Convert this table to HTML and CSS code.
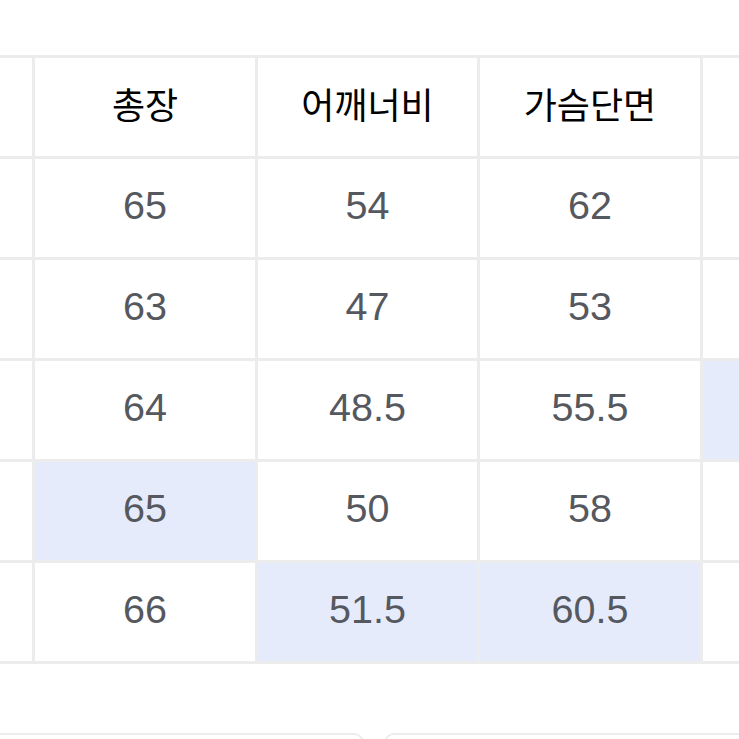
FILE: index.html
```html
<!DOCTYPE html>
<html lang="ko">
<head>
<meta charset="utf-8">
<link rel="stylesheet" href="styles.css">
</head>
<body>
<div class="page">
  <div class="table">
    <div class="cell"></div>
    <div class="cell head">총장</div>
    <div class="cell head">어깨너비</div>
    <div class="cell head">가슴단면</div>
    <div class="cell"></div>

    <div class="cell"></div>
    <div class="cell">65</div>
    <div class="cell">54</div>
    <div class="cell">62</div>
    <div class="cell"></div>

    <div class="cell"></div>
    <div class="cell">63</div>
    <div class="cell">47</div>
    <div class="cell">53</div>
    <div class="cell"></div>

    <div class="cell"></div>
    <div class="cell">64</div>
    <div class="cell">48.5</div>
    <div class="cell">55.5</div>
    <div class="cell hl"></div>

    <div class="cell"></div>
    <div class="cell hl">65</div>
    <div class="cell">50</div>
    <div class="cell">58</div>
    <div class="cell"></div>

    <div class="cell"></div>
    <div class="cell">66</div>
    <div class="cell hl">51.5</div>
    <div class="cell hl">60.5</div>
    <div class="cell"></div>
  </div>
  <div class="bottom">
    <div class="box box-left"></div>
    <div class="box box-right"></div>
  </div>
</div>
</body>
</html>
```

FILE: styles.css
```css
html, body {
  margin: 0;
  padding: 0;
  background: #ffffff;
}

.page {
  width: 739px;
  height: 739px;
  overflow: hidden;
  padding-top: 55px;
  box-sizing: border-box;
}

.table {
  display: grid;
  grid-template-columns: 32px 220px 219px 220px 1fr;
  grid-auto-rows: 98px;
  gap: 3px;
  padding: 3px 0;
  background: #ececec;
}

.cell {
  background: #ffffff;
  display: flex;
  align-items: center;
  justify-content: center;
  padding-bottom: 5px;
  box-sizing: border-box;
  font-family: "Liberation Sans", Arial, sans-serif;
  font-size: 39.5px;
  color: #55585e;
}

.cell.head {
  font-family: "Noto Sans CJK KR", "Noto Sans", sans-serif;
  font-size: 36px;
  font-weight: 400;
  color: #000000;
  padding-bottom: 8px;
}

.cell.hl {
  background: #e6ebfb;
}

.bottom {
  display: flex;
  gap: 20px;
  margin-top: 69px;
}

.box {
  height: 40px;
  border-top: 2px solid #ececec;
}

.box-left {
  width: 362px;
  border-right: 2px solid #ececec;
  border-top-right-radius: 10px;
}

.box-right {
  flex: 1;
  border-left: 2px solid #ececec;
  border-top-left-radius: 10px;
}
```
